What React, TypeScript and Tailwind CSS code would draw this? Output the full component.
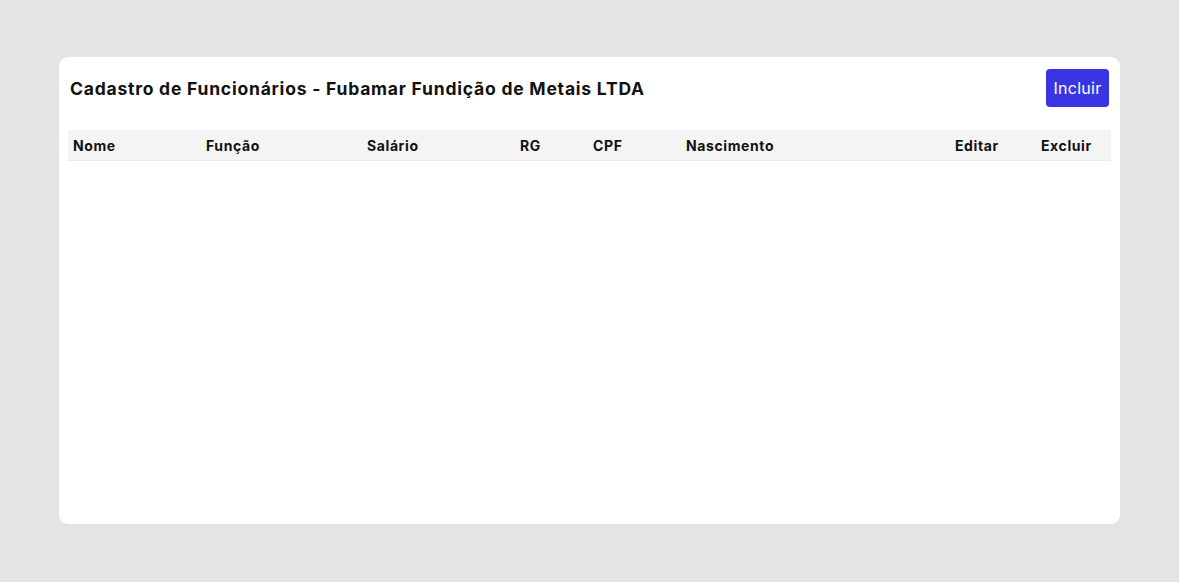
import React from "react";

const cols = [
  { label: "Nome", w: "w-[133px]" },
  { label: "Função", w: "w-[161px]" },
  { label: "Salário", w: "w-[153px]" },
  { label: "RG", w: "w-[73px]" },
  { label: "CPF", w: "w-[93px]" },
  { label: "Nascimento", w: "w-[269px]" },
  { label: "Editar", w: "w-[86px]" },
  { label: "Excluir", w: "flex-1" },
];

export default function App() {
  return (
    <div className="min-h-[582px] bg-[#e4e4e4] px-[59px] pt-[57px] font-['Inter',sans-serif]">
      <div className="h-[467px] rounded-[9px] bg-white px-[9px] pt-[12px]">
        <div className="flex items-center justify-between pl-[2px] pr-[1px]">
          <h1 className="pt-[2px] text-[17.5px] font-bold tracking-[0.78px] text-[#111]">
            Cadastro de Funcionários - Fubamar Fundição de Metais LTDA
          </h1>
          <button className="mr-[1px] h-[38px] w-[63px] rounded-[4px] bg-[#3a35e2] text-[16px] tracking-[0.3px] text-white">
            Incluir
          </button>
        </div>
        <div className="mt-[23px] flex h-[31px] items-center border-b border-[#ececec] bg-[#f4f4f4] text-[14px] font-bold tracking-[0.6px] text-[#111]">
          {cols.map((c) => (
            <div key={c.label} className={`${c.w} pl-[5px]`}>
              {c.label}
            </div>
          ))}
        </div>
      </div>
    </div>
  );
}
